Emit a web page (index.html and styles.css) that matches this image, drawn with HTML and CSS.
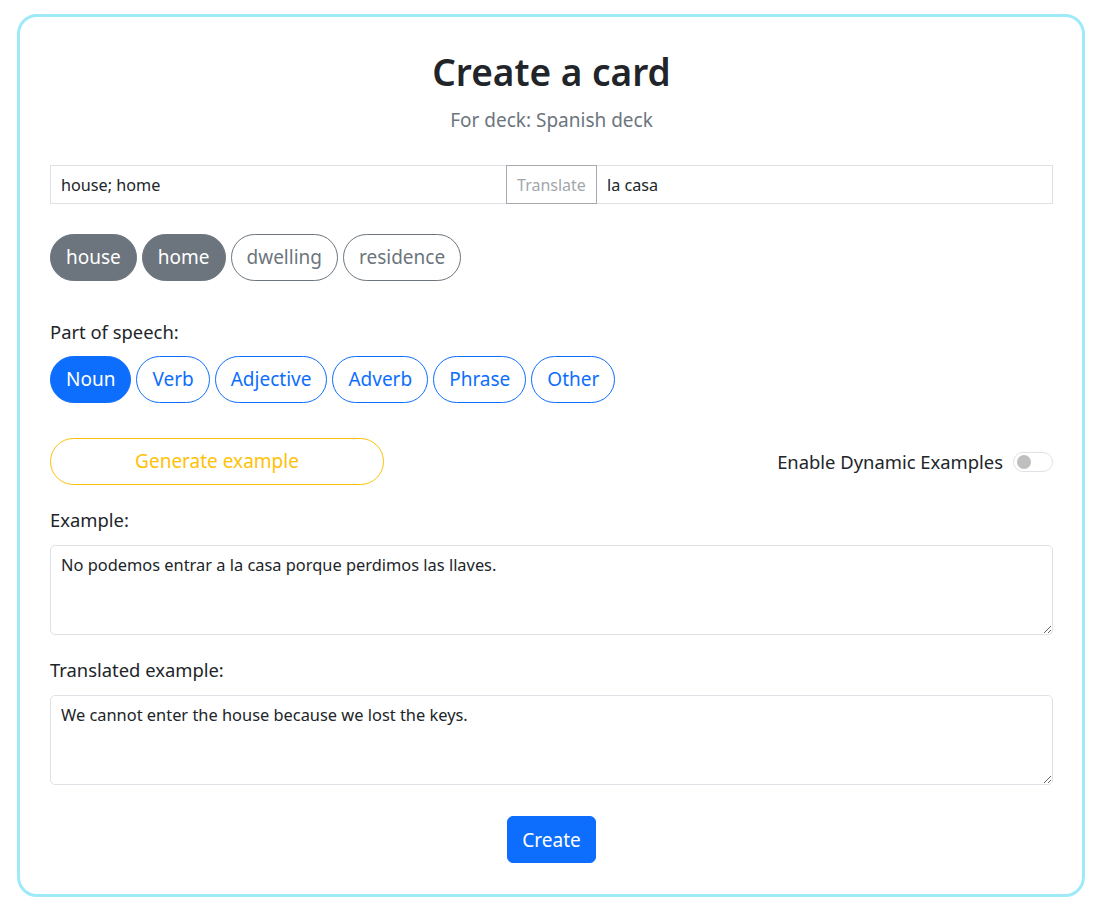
FILE: index.html
```html
<!DOCTYPE html>
<html lang="en">
<head>
<meta charset="utf-8">
<title>Create a card</title>
<link rel="stylesheet" href="styles.css">
</head>
<body>
<div class="card">
  <h1 class="title">Create a card</h1>
  <p class="subtitle">For deck: Spanish deck</p>

  <div class="input-group">
    <input class="field" type="text" value="house; home">
    <button class="translate" type="button">Translate</button>
    <input class="field" type="text" value="la casa">
  </div>

  <div class="chips">
    <button class="pill chip-on" type="button">house</button>
    <button class="pill chip-on" type="button">home</button>
    <button class="pill chip-off" type="button">dwelling</button>
    <button class="pill chip-off" type="button">residence</button>
  </div>

  <label class="label pos-label">Part of speech:</label>
  <div class="chips">
    <button class="pill pos-on" type="button">Noun</button>
    <button class="pill pos-off" type="button">Verb</button>
    <button class="pill pos-off" type="button">Adjective</button>
    <button class="pill pos-off" type="button">Adverb</button>
    <button class="pill pos-off" type="button">Phrase</button>
    <button class="pill pos-off" type="button">Other</button>
  </div>

  <div class="gen-row">
    <button class="pill generate" type="button">Generate example</button>
    <label class="switch-label">
      <span>Enable Dynamic Examples</span>
      <span class="switch"><span class="knob"></span></span>
    </label>
  </div>

  <label class="label">Example:</label>
  <textarea class="area">No podemos entrar a la casa porque perdimos las llaves.</textarea>

  <label class="label">Translated example:</label>
  <textarea class="area">We cannot enter the house because we lost the keys.</textarea>

  <div class="actions">
    <button class="create" type="button">Create</button>
  </div>
</div>
</body>
</html>
```

FILE: styles.css
```css
* { box-sizing: border-box; }
html, body { margin: 0; background: #fff; }
body {
  font-family: "Noto Sans", "Open Sans", sans-serif;
  color: #212529;
  font-size: 16px;
  padding: 14px 22px 0 17px;
}
.card {
  border: 3px solid #9eeaf9;
  border-radius: 20px;
  padding: 31px 29px 31px 30px;
}
.title {
  margin: 0;
  text-align: center;
  font-size: 37px;
  font-weight: 600;
  line-height: 48px;
}
.subtitle {
  margin: 10px 0 0;
  text-align: center;
  color: #6c757d;
  font-size: 19px;
  line-height: 28px;
}
.input-group {
  display: flex;
  margin-top: 31px;
  height: 39px;
}
.field {
  flex: 1;
  min-width: 0;
  border: 1px solid #dee2e6;
  font: inherit;
  font-size: 16.2px;
  padding: 0 10px;
  color: #212529;
  background: #fff;
  outline: none;
}
.field:first-child { border-right: none; }
.field:last-child { border-left: none; }
.translate {
  border: 1px solid #a6abb0;
  background: #fff;
  color: #a3a7ab;
  font: inherit;
  font-size: 16px;
  padding: 0 10px;
  width: 91px;
}
.chips {
  display: flex;
  gap: 5px;
  margin-top: 30px;
}
.pill {
  font: inherit;
  font-size: 19px;
  height: 47px;
  padding: 0 15px;
  border-radius: 24px;
  background: #fff;
  border: 1px solid;
  line-height: 1;
}
.chip-on { background: #6c757d; border-color: #6c757d; color: #fff; }
.chip-off { border-color: #6c757d; color: #6c757d; }
.pos-on { background: #0d6efd; border-color: #0d6efd; color: #fff; }
.pos-off { border-color: #0d6efd; color: #0d6efd; }
.label {
  display: block;
  font-size: 18.4px;
  line-height: 26px;
  margin-top: 18px;
  margin-bottom: 12px;
}
.pos-label { margin-top: 38px; margin-bottom: 0; }
.pos-label + .chips { margin-top: 11px; }
.gen-row {
  display: flex;
  align-items: center;
  justify-content: space-between;
  margin-top: 35px;
}
.generate {
  width: 334px;
  border-color: #ffc107;
  color: #ffc107;
}
.switch-label {
  display: flex;
  align-items: center;
  gap: 10px;
  font-size: 18.4px;
}
.switch {
  width: 40px;
  height: 20px;
  border: 1px solid #dee2e6;
  border-radius: 10px;
  display: flex;
  align-items: center;
  padding-left: 3px;
}
.knob {
  width: 14px;
  height: 14px;
  border-radius: 50%;
  background: #bfbfbf;
}
.gen-row + .label { margin-top: 22px; }
.area {
  display: block;
  width: 100%;
  height: 90px;
  border: 1px solid #dee2e6;
  border-radius: 5px;
  font: inherit;
  font-size: 16.4px;
  padding: 7px 10px;
  color: #212529;
  resize: vertical;
  outline: none;
  line-height: 24px;
}
.area + .label { margin-top: 22px; }
.actions {
  display: flex;
  justify-content: center;
  margin-top: 31px;
}
.create {
  background: #0d6efd;
  border: 1px solid #0d6efd;
  color: #fff;
  font: inherit;
  font-size: 19px;
  height: 47px;
  width: 89px;
  border-radius: 6px;
}
```
